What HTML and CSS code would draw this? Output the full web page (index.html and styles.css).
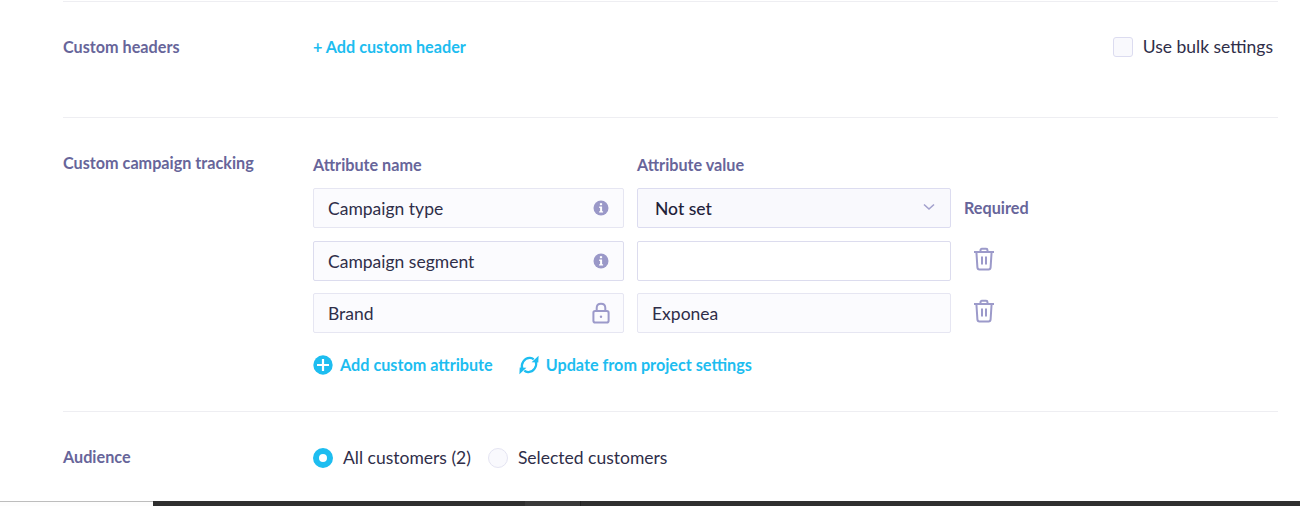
FILE: index.html
```html
<!DOCTYPE html>
<html lang="en">
<head>
<meta charset="utf-8">
<title>Campaign settings</title>
<link rel="stylesheet" href="styles.css">
</head>
<body>
<main class="form">
  <section class="row row-headers">
    <div class="row-label">Custom headers</div>
    <div class="row-body headers-body">
      <a class="link">+ Add custom header</a>
      <label class="bulk"><span class="checkbox"></span><span>Use bulk settings</span></label>
    </div>
  </section>
  <section class="row row-tracking">
    <div class="row-label">Custom campaign tracking</div>
    <div class="row-body">
      <div class="attr-head">
        <div class="col-name">Attribute name</div>
        <div class="col-value">Attribute value</div>
      </div>
      <div class="attr-row first">
        <div class="field col-name filled"><span>Campaign type</span>
          <svg class="icon" width="16" height="16" viewBox="0 0 16 16"><circle cx="8" cy="8" r="7.5" fill="#9a98c8"/><rect x="6.9" y="3.2" width="2.2" height="2" fill="#fff"/><path d="M6.2 6.6h2.9v4.6h1v1.3H6.1v-1.3h1V7.9h-.9z" fill="#fff"/></svg>
        </div>
        <div class="field col-value select"><span>Not set</span>
          <svg class="chevron" width="12" height="8" viewBox="0 0 12 8"><path d="M1 1.5l5 4.5 5-4.5" fill="none" stroke="#a3a1cd" stroke-width="1.6"/></svg>
        </div>
        <div class="required">Required</div>
      </div>
      <div class="attr-row second">
        <div class="field col-name filled strong"><span>Campaign segment</span>
          <svg class="icon" width="16" height="16" viewBox="0 0 16 16"><circle cx="8" cy="8" r="7.5" fill="#9a98c8"/><rect x="6.9" y="3.2" width="2.2" height="2" fill="#fff"/><path d="M6.2 6.6h2.9v4.6h1v1.3H6.1v-1.3h1V7.9h-.9z" fill="#fff"/></svg>
        </div>
        <div class="field col-value empty strong"></div>
        <svg class="trash" width="22" height="24" viewBox="0 0 22 24"><g fill="none" stroke="#9c9aca" stroke-width="2"><path d="M1 5h20"/><path d="M7.5 5V3.2c0-.9.6-1.4 1.4-1.4h4.2c.8 0 1.4.5 1.4 1.4V5"/><path d="M3.4 5l1 15.4c.1 1.3.8 2 2 2h9.2c1.2 0 1.9-.7 2-2l1-15.4"/><path d="M9 9.5v8M13 9.5v8"/></g></svg>
      </div>
      <div class="attr-row third">
        <div class="field col-name filled"><span>Brand</span>
          <svg class="icon lock" width="18" height="22" viewBox="0 0 18 22"><g fill="none" stroke="#9c9aca" stroke-width="2"><rect x="1.4" y="8.9" width="15.2" height="11.7" rx="1.8"/><path d="M4.7 8.9V6c0-2.6 1.8-4.3 4.3-4.3s4.3 1.7 4.3 4.3v2.9"/></g><circle cx="9" cy="14.8" r="1.2" fill="#9c9aca"/></svg>
        </div>
        <div class="field col-value filled plain"><span>Exponea</span></div>
        <svg class="trash" width="22" height="24" viewBox="0 0 22 24"><g fill="none" stroke="#9c9aca" stroke-width="2"><path d="M1 5h20"/><path d="M7.5 5V3.2c0-.9.6-1.4 1.4-1.4h4.2c.8 0 1.4.5 1.4 1.4V5"/><path d="M3.4 5l1 15.4c.1 1.3.8 2 2 2h9.2c1.2 0 1.9-.7 2-2l1-15.4"/><path d="M9 9.5v8M13 9.5v8"/></g></svg>
      </div>
      <div class="actions">
        <a class="link action"><svg width="20" height="20" viewBox="0 0 20 20"><circle cx="10" cy="10" r="9.7" fill="#1dbdf0"/><path d="M10 4v12M4 10h12" stroke="#fff" stroke-width="2.2"/></svg>Add custom attribute</a>
        <a class="link action sync"><svg width="20" height="20" viewBox="0 0 20 20"><g fill="none" stroke="#1dbdf0" stroke-width="2.2"><path d="M3.2 14C1.500 8.500 5.500 2.600 11 2.900c1.500.1 2.700.6 3.700 1.400"/><path d="M16.800 6c1.700 5.500-2.300 11.400-7.800 11.100-1.500-.1-2.700-.6-3.700-1.400"/></g><path d="M12.600 7.200l6.700.3.300-6.700z" fill="#1dbdf0"/><path d="M7.400 12.800l-6.700-.3-.3 6.700z" fill="#1dbdf0"/></svg>Update from project settings</a>
      </div>
    </div>
  </section>
  <section class="row row-audience">
    <div class="row-label">Audience</div>
    <div class="row-body radios">
      <label class="radio-item"><span class="radio on"></span><span class="radio-text">All customers (2)</span></label>
      <label class="radio-item"><span class="radio"></span><span class="radio-text">Selected customers</span></label>
    </div>
  </section>
</main>
<footer class="taskbar">
  <div class="task-light"></div>
  <div class="task-a"></div>
  <div class="task-b"></div>
  <div class="task-a fill"></div>
</footer>
</body>
</html>
```
FILE: styles.css
```css
* { box-sizing: border-box; }
html, body { margin: 0; padding: 0; }
body {
  width: 1300px;
  height: 506px;
  overflow: hidden;
  background: #fff;
  font-family: Lato, sans-serif;
  color: #2f2e49;
  font-size: 17.5px;
  display: flex;
  flex-direction: column;
}
.form {
  height: 501px;
  padding: 1px 22px 0 63px;
}
.row {
  display: flex;
  border-top: 1px solid #eeeef2;
}
.row-label {
  width: 250px;
  flex: none;
  font-size: 16.2px;
  font-weight: 700;
  line-height: 20px;
  color: #67659a;
}
.row-body { flex: 1; }
.row-headers { height: 116px; padding-top: 35px; }
.headers-body {
  display: flex;
  justify-content: space-between;
  align-items: flex-start;
  padding-right: 5px;
}
.link {
  color: #1dbdf0;
  font-size: 16.2px;
  font-weight: 700;
  line-height: 20px;
}
.bulk { display: flex; align-items: center; gap: 10px; line-height: 20px; }
.checkbox {
  width: 20px;
  height: 20px;
  border: 1px solid #dcdcf0;
  border-radius: 3px;
  background: #f9f9fd;
}
.row-tracking { height: 294px; padding-top: 35px; }
.attr-head {
  display: flex;
  gap: 13px;
  font-size: 16.2px;
  font-weight: 700;
  line-height: 20px;
  color: #67659a;
  margin-top: 2px;
  margin-bottom: 13px;
}
.col-name { width: 311px; flex: none; }
.col-value { width: 314px; flex: none; }
.attr-row { display: flex; gap: 13px; align-items: center; height: 40px; }
.attr-row.second { margin-top: 13px; }
.attr-row.third { margin-top: 12px; }
.field {
  height: 40px;
  border: 1px solid #e6e6f2;
  border-radius: 2px;
  display: flex;
  align-items: center;
  justify-content: space-between;
  padding: 0 14px;
  line-height: 20px;
}
.field span { padding-top: 2px; }
.field.strong { border-color: #dcdcee; }
.filled { background: #fbfbfe; }
.select {
  background: #f9f9fd;
  border-color: #dcdcf0;
  padding: 0 15px 0 17px;
  font-weight: 500;
  color: #23223a;
}
.empty { background: #fff; }
.icon { flex: none; }
.lock { margin-right: -1px; }
.chevron { margin-bottom: 2px; }
.required {
  font-size: 16.2px;
  font-weight: 700;
  color: #67659a;
  margin-bottom: 2px;
}
.trash { margin: -4px 0 0 9px; }
.actions { display: flex; gap: 26px; margin-top: 22px; }
.action { display: flex; align-items: center; gap: 7px; }
.action svg { flex: none; }
.row-audience { height: 90px; padding-top: 35px; }
.radios { display: flex; gap: 17px; align-items: flex-start; line-height: 20px; }
.radio-item { display: flex; align-items: center; gap: 10px; }
.radio-text { padding-top: 1px; }
.radio {
  width: 20px;
  height: 20px;
  border-radius: 50%;
  border: 1px solid #e4e4f2;
  background: #f9f9fd;
}
.radio.on { border: 6px solid #1dbdf0; background: #fff; }
.taskbar { height: 5px; display: flex; flex: none; }
.task-light { width: 153px; background: #fdfdfd; border-top: 1px solid #bdbdbd; }
.task-a { width: 372px; background: #2f2f2f; }
.task-b { width: 56px; background: #3a3a3a; border-right: 1px solid #222; }
.fill { flex: 1; }
```
